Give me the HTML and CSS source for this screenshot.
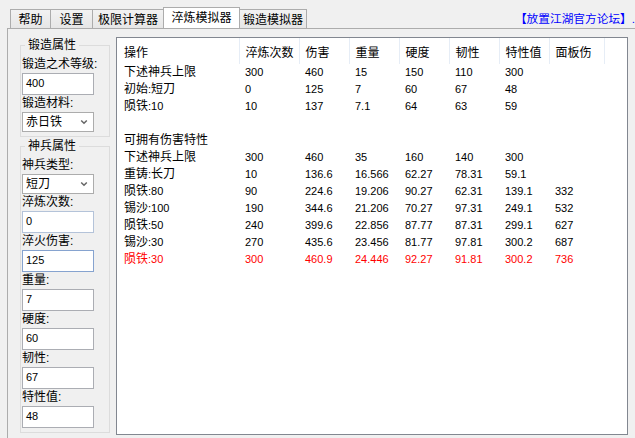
FILE: index.html
```html
<!DOCTYPE html>
<html>
<head>
<meta charset="utf-8">
<link rel="stylesheet" href="styles.css">
</head>
<body>
<div class="topbar">
  <div class="tabs">
    <div class="tab t1">帮助</div>
    <div class="tab t2">设置</div>
    <div class="tab t3">极限计算器</div>
    <div class="tab t4 active">淬炼模拟器</div>
    <div class="tab t5">锻造模拟器</div>
  </div>
  <a class="forum">【放置江湖官方论坛】.</a>
</div>
<div class="pane">
  <div class="side">
    <fieldset class="group">
      <legend>锻造属性</legend>
      <div class="lbl">锻造之术等级:</div>
      <div class="box">400</div>
      <div class="lbl">锻造材料:</div>
      <div class="combo"><span>赤日铁</span><svg class="chev" width="8" height="6" viewBox="0 0 8 6"><path d="M1.2 1.5 L4 4.3 L6.8 1.5" fill="none" stroke="#666" stroke-width="1.5"/></svg></div>
    </fieldset>
    <fieldset class="group g2">
      <legend>神兵属性</legend>
      <div class="lbl">神兵类型:</div>
      <div class="combo"><span>短刀</span><svg class="chev" width="8" height="6" viewBox="0 0 8 6"><path d="M1.2 1.5 L4 4.3 L6.8 1.5" fill="none" stroke="#666" stroke-width="1.5"/></svg></div>
      <div class="lbl">淬炼次数:</div>
      <div class="box hover">0</div>
      <div class="lbl">淬火伤害:</div>
      <div class="box focus">125</div>
      <div class="lbl">重量:</div>
      <div class="box">7</div>
      <div class="lbl">硬度:</div>
      <div class="box">60</div>
      <div class="lbl">韧性:</div>
      <div class="box">67</div>
      <div class="lbl">特性值:</div>
      <div class="box">48</div>
    </fieldset>
  </div>
  <div class="listview">
    <table>
      <colgroup>
        <col class="c0"><col class="c1"><col class="c2"><col class="c2"><col class="c2"><col class="c2"><col class="c2"><col class="c7"><col>
      </colgroup>
      <thead>
        <tr><th class="first">操作</th><th>淬炼次数</th><th>伤害</th><th>重量</th><th>硬度</th><th>韧性</th><th>特性值</th><th>面板伤</th><th class="fill"></th></tr>
      </thead>
      <tbody>
        <tr><td class="first zh">下述神兵上限</td><td>300</td><td>460</td><td>15</td><td>150</td><td>110</td><td>300</td><td></td><td></td></tr>
        <tr><td class="first"><span class="zh">初始</span>:<span class="zh">短刀</span></td><td>0</td><td>125</td><td>7</td><td>60</td><td>67</td><td>48</td><td></td><td></td></tr>
        <tr><td class="first"><span class="zh">陨铁</span>:10</td><td>10</td><td>137</td><td>7.1</td><td>64</td><td>63</td><td>59</td><td></td><td></td></tr>
        <tr><td class="first"></td><td></td><td></td><td></td><td></td><td></td><td></td><td></td><td></td></tr>
        <tr><td class="first zh">可拥有伤害特性</td><td></td><td></td><td></td><td></td><td></td><td></td><td></td><td></td></tr>
        <tr><td class="first zh">下述神兵上限</td><td>300</td><td>460</td><td>35</td><td>160</td><td>140</td><td>300</td><td></td><td></td></tr>
        <tr><td class="first"><span class="zh">重铸</span>:<span class="zh">长刀</span></td><td>10</td><td>136.6</td><td>16.566</td><td>62.27</td><td>78.31</td><td>59.1</td><td></td><td></td></tr>
        <tr><td class="first"><span class="zh">陨铁</span>:80</td><td>90</td><td>224.6</td><td>19.206</td><td>90.27</td><td>62.31</td><td>139.1</td><td>332</td><td></td></tr>
        <tr><td class="first"><span class="zh">锡沙</span>:100</td><td>190</td><td>344.6</td><td>21.206</td><td>70.27</td><td>97.31</td><td>249.1</td><td>532</td><td></td></tr>
        <tr><td class="first"><span class="zh">陨铁</span>:50</td><td>240</td><td>399.6</td><td>22.856</td><td>87.77</td><td>87.31</td><td>299.1</td><td>627</td><td></td></tr>
        <tr><td class="first"><span class="zh">锡沙</span>:30</td><td>270</td><td>435.6</td><td>23.456</td><td>81.77</td><td>97.81</td><td>300.2</td><td>687</td><td></td></tr>
        <tr class="hl"><td class="first"><span class="zh">陨铁</span>:30</td><td>300</td><td>460.9</td><td>24.446</td><td>92.27</td><td>91.81</td><td>300.2</td><td>736</td><td></td></tr>
      </tbody>
    </table>
  </div>
</div>
</body>
</html>
```

FILE: styles.css
```css
html, body {
  margin: 0;
  padding: 0;
}
body {
  width: 635px;
  height: 438px;
  overflow: hidden;
  background: #f0f0f0;
  font-family: "Liberation Sans", "Noto Sans CJK SC", sans-serif;
  font-size: 11px;
  color: #000;
}
.topbar {
  display: flex;
  height: 28px;
  overflow: hidden;
  padding-left: 10px;
}
.tabs {
  display: flex;
  align-items: flex-end;
  height: 28px;
}
.tab {
  box-sizing: border-box;
  height: 19px;
  padding-top: 2px;
  line-height: 17px;
  font-size: 12px;
  text-align: center;
  border: 1px solid #acacac;
  border-bottom: none;
  background: linear-gradient(#f2f2f2, #e6e6e6);
  margin-left: -1px;
}
.t1 { width: 41px; margin-left: 0; }
.t2 { width: 43px; }
.t3 { width: 72px; }
.t4 { width: 77px; }
.t5 { width: 68px; }
.tab.active {
  position: relative;
  z-index: 2;
  height: 22px;
  margin-bottom: -1px;
  padding-top: 2px;
  background: #fff;
}
.forum {
  flex: 0 0 auto;
  margin-left: auto;
  margin-top: 10px;
  line-height: 17px;
  height: 17px;
  font-size: 11.7px;
  color: #0000ff;
  white-space: nowrap;
}
.pane {
  display: flex;
  align-items: flex-start;
  margin-left: 7px;
  border-top: 1px solid #acacac;
  border-left: 1px solid #acacac;
  padding: 8px 0 0 12px;
  height: 420px;
}
.side {
  width: 90px;
  margin-right: 6px;
  display: flex;
  flex-direction: column;
}
.group {
  margin: 0;
  padding: 2px 0 4px 1px;
  border: 1px solid #dcdcdc;
  min-width: 0;
}
.group.g2 {
  margin-top: 1px;
}
.group legend {
  padding: 0 3px;
  margin-left: 3px;
  line-height: 17px;
  font-size: 12px;
}
.lbl {
  height: 17px;
  line-height: 17px;
  font-size: 12px;
  white-space: nowrap;
}
.box {
  box-sizing: border-box;
  width: 72px;
  height: 22px;
  border: 1px solid #abadb3;
  background: #fff;
  padding-left: 3px;
  line-height: 18px;
  font-size: 11px;
}
.box.hover {
  border-color: #b4c3d9;
}
.box.focus {
  border-color: #86a3cf;
}
.combo {
  box-sizing: border-box;
  width: 72px;
  height: 20px;
  border: 1px solid #acacac;
  background: #fff;
  padding-left: 3px;
  padding-right: 5px;
  display: flex;
  align-items: center;
  justify-content: space-between;
  font-size: 12px;
  line-height: 17px;
}
.chev {
  display: block;
}
.listview {
  box-sizing: border-box;
  width: 512px;
  height: 398px;
  border: 1px solid #828790;
  background: #fff;
}
table {
  width: 510px;
  table-layout: fixed;
  border-collapse: collapse;
}
col.c0 { width: 122px; }
col.c1 { width: 60px; }
col.c2 { width: 50px; }
col.c7 { width: 55px; }
th {
  height: 26px;
  padding: 0 0 0 6px;
  text-align: left;
  font-weight: normal;
  font-size: 12px;
  white-space: nowrap;
  border-right: 1px solid #e6edf6;
  box-sizing: border-box;
}
th.fill {
  border-right: none;
}
td {
  height: 17px;
  line-height: 17px;
  padding: 0 0 0 6px;
  white-space: nowrap;
  overflow: hidden;
  font-size: 11px;
}
th.first, td.first {
  padding-left: 7px;
}
td.zh, .zh {
  font-size: 12px;
}
tr.hl td {
  color: #ff0000;
}
```
